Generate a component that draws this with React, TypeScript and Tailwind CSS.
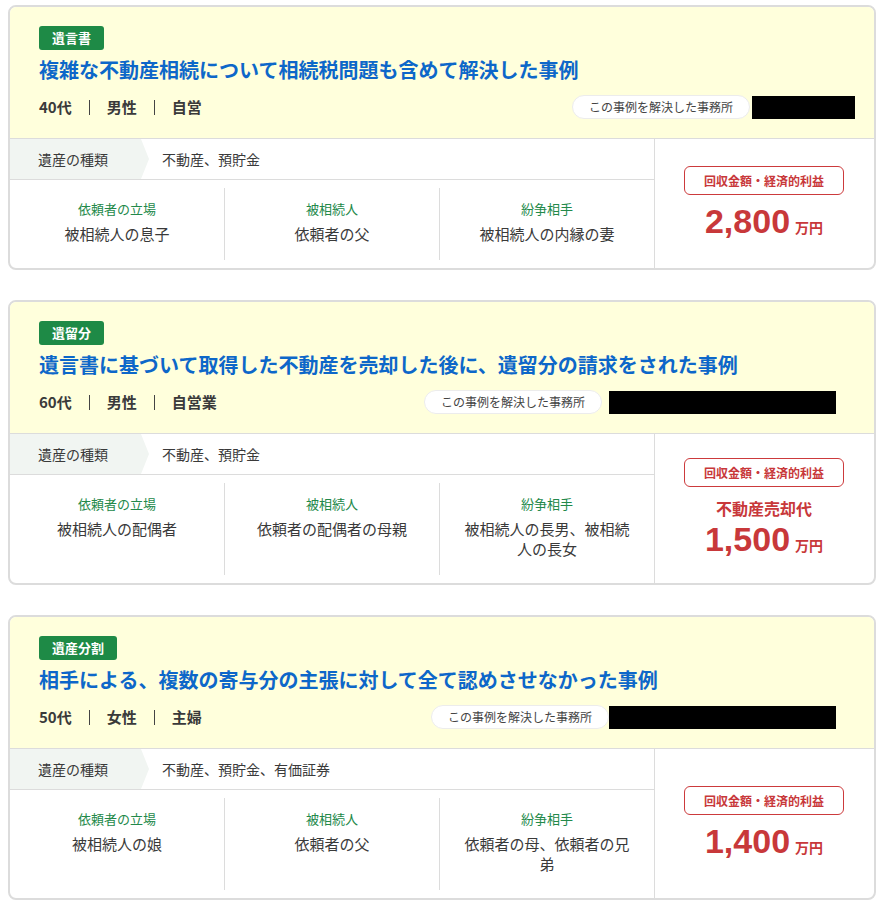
type CaseItem = {
  tag: string
  title: string
  meta: string[]
  officeWidth: string
  officeGap: string
  officeRight: string
  assets: string
  client: string
  deceased: string
  opponent: string
  note?: string
  amount: string
}

const cases: CaseItem[] = [
  {
    tag: '遺言書',
    title: '複雑な不動産相続について相続税問題も含めて解決した事例',
    meta: ['40代', '男性', '自営'],
    officeWidth: 'w-[103px]',
    officeGap: 'ml-[2px]',
    officeRight: 'mr-[19px]',
    assets: '不動産、預貯金',
    client: '被相続人の息子',
    deceased: '依頼者の父',
    opponent: '被相続人の内縁の妻',
    amount: '2,800',
  },
  {
    tag: '遺留分',
    title: '遺言書に基づいて取得した不動産を売却した後に、遺留分の請求をされた事例',
    meta: ['60代', '男性', '自営業'],
    officeWidth: 'w-[227px]',
    officeGap: 'ml-[7px]',
    officeRight: 'mr-[38px]',
    assets: '不動産、預貯金',
    client: '被相続人の配偶者',
    deceased: '依頼者の配偶者の母親',
    opponent: '被相続人の長男、被相続人の長女',
    note: '不動産売却代',
    amount: '1,500',
  },
  {
    tag: '遺産分割',
    title: '相手による、複数の寄与分の主張に対して全て認めさせなかった事例',
    meta: ['50代', '女性', '主婦'],
    officeWidth: 'w-[227px]',
    officeGap: 'ml-0',
    officeRight: 'mr-[38px]',
    assets: '不動産、預貯金、有価証券',
    client: '被相続人の娘',
    deceased: '依頼者の父',
    opponent: '依頼者の母、依頼者の兄弟',
    amount: '1,400',
  },
]

function Party({ label, value, last }: { label: string; value: string; last?: boolean }) {
  return (
    <div
      className={`flex flex-1 flex-col items-center px-[22px] pt-3 pb-4 text-center ${
        last ? '' : 'border-r border-[#dcdcdc]'
      }`}
    >
      <p className="text-[13px] leading-[18px] text-[#23894a]">{label}</p>
      <p className="mt-[6px] text-[15px] leading-[20px] text-[#3a3a3a]">{value}</p>
    </div>
  )
}

function CaseCard({ c }: { c: CaseItem }) {
  return (
    <article className="mb-[30px] overflow-hidden rounded-lg border-2 border-[#dcdcdc] bg-white">
      <header className="flex flex-col items-start border-b border-[#dcdcdc] bg-[#ffffdc] pt-[19px] pb-[19px] pl-[29px]">
        <span className="block rounded-[3px] bg-[#1e8a46] px-[13px] text-[13px] leading-[24px] font-bold text-white">
          {c.tag}
        </span>
        <h2 className="mt-[8px] text-[20px] leading-[24px] font-bold text-[#0d67c9]">{c.title}</h2>
        <div className="mt-[13px] flex w-full items-center">
          <p className="flex items-center text-[15px] leading-[22px] font-bold text-[#3a3a3a]">
            {c.meta.map((m, i) => (
              <span key={i} className="flex items-center">
                {i > 0 && <span className="mx-[17px] h-[15px] w-px bg-[#444]" />}
                {m}
              </span>
            ))}
          </p>
          <div className={`ml-auto flex items-center ${c.officeRight}`}>
            <span className="rounded-full border border-[#ececec] bg-white px-[16px] text-[12px] leading-[22px] text-[#444]">
              この事例を解決した事務所
            </span>
            <span className={`h-[23px] bg-black ${c.officeWidth} ${c.officeGap}`} />
          </div>
        </div>
      </header>

      <div className="flex">
        <div className="flex w-[644px] flex-col">
          <div className="flex h-[41px] items-center border-b border-[#dcdcdc]">
            <div className="flex h-full w-[139px] items-center bg-[#f1f5f2] pl-[28px] text-[14px] text-[#3a3a3a] [clip-path:polygon(0_0,calc(100%_-_8px)_0,100%_50%,calc(100%_-_8px)_100%,0_100%)]">
              遺産の種類
            </div>
            <span className="ml-[13px] text-[14px] text-[#3a3a3a]">{c.assets}</span>
          </div>
          <div className="flex py-2">
            <Party label="依頼者の立場" value={c.client} />
            <Party label="被相続人" value={c.deceased} />
            <Party label="紛争相手" value={c.opponent} last />
          </div>
        </div>

        <div className="flex flex-1 flex-col items-center justify-center border-l border-[#dcdcdc] pr-[1px]">
          <span className="rounded-md border border-[#cc3a3c] px-[19px] text-[12px] leading-[27px] font-bold text-[#c8383a]">
            回収金額・経済的利益
          </span>
          {c.note && (
            <p className="mt-[10px] text-[16px] leading-[22px] font-bold text-[#c8383a]">{c.note}</p>
          )}
          <p className={`${c.note ? 'mt-0' : 'mt-[6px]'} flex items-baseline text-[#c8383a]`}>
            <span className="font-['Liberation_Sans',Arial,sans-serif] text-[34px] leading-[40px] font-bold">
              {c.amount}
            </span>
            <span className="ml-[5px] text-[14px] font-bold">万円</span>
          </p>
        </div>
      </div>
    </article>
  )
}

export default function App() {
  return (
    <div className="min-h-screen bg-white pt-[5px] pr-[9px] pl-2 font-['Noto_Sans_CJK_JP','Noto_Sans',sans-serif]">
      {cases.map((c, i) => (
        <CaseCard key={i} c={c} />
      ))}
    </div>
  )
}
